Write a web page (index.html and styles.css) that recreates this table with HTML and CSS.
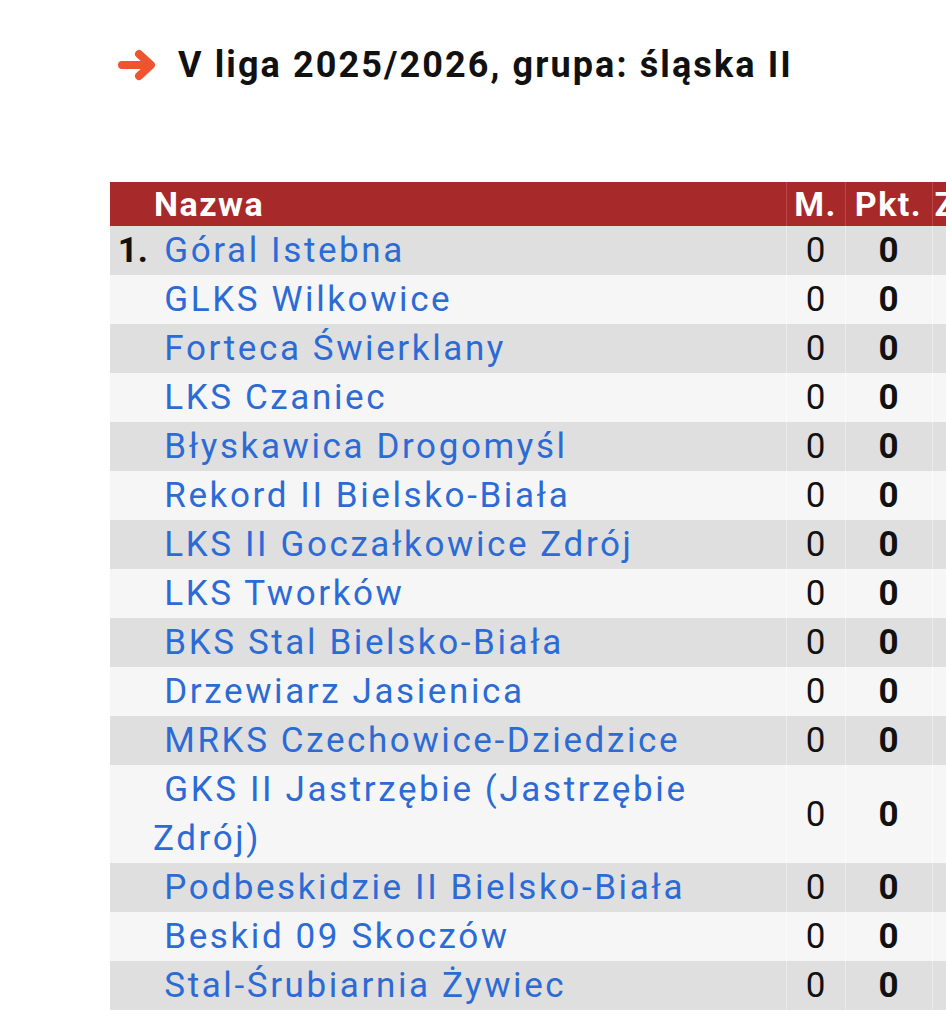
FILE: index.html
```html
<!DOCTYPE html>
<html lang="pl">
<head>
<meta charset="utf-8">
<title>V liga 2025/2026</title>
<link rel="stylesheet" href="styles.css">
</head>
<body>
<div class="page">
  <h2 class="title">
    <svg class="arrow" viewBox="0 0 40 32" width="40" height="32" aria-hidden="true">
      <path d="M5 16 H33" stroke="#ef5430" stroke-width="8" stroke-linecap="round" fill="none"/>
      <path d="M22 5 L34 16 L22 27" stroke="#ef5430" stroke-width="8" stroke-linecap="round" stroke-linejoin="round" fill="none"/>
    </svg>
    <span>V liga 2025/2026, grupa: śląska II</span>
  </h2>
  <table class="standings">
    <colgroup>
      <col class="c-pos"><col class="c-name"><col class="c-m"><col class="c-pkt"><col class="c-z">
    </colgroup>
    <thead>
      <tr><th></th><th class="name">Nazwa</th><th>M.</th><th>Pkt.</th><th>Zw.</th></tr>
    </thead>
    <tbody>
      <tr><td class="pos">1.</td><td class="name"> <a href="#">Góral Istebna</a></td><td>0</td><td class="pkt">0</td><td>0</td></tr>
      <tr><td class="pos"></td><td class="name"> <a href="#">GLKS Wilkowice</a></td><td>0</td><td class="pkt">0</td><td>0</td></tr>
      <tr><td class="pos"></td><td class="name"> <a href="#">Forteca Świerklany</a></td><td>0</td><td class="pkt">0</td><td>0</td></tr>
      <tr><td class="pos"></td><td class="name"> <a href="#">LKS Czaniec</a></td><td>0</td><td class="pkt">0</td><td>0</td></tr>
      <tr><td class="pos"></td><td class="name"> <a href="#">Błyskawica Drogomyśl</a></td><td>0</td><td class="pkt">0</td><td>0</td></tr>
      <tr><td class="pos"></td><td class="name"> <a href="#">Rekord II Bielsko-Biała</a></td><td>0</td><td class="pkt">0</td><td>0</td></tr>
      <tr><td class="pos"></td><td class="name"> <a href="#">LKS II Goczałkowice Zdrój</a></td><td>0</td><td class="pkt">0</td><td>0</td></tr>
      <tr><td class="pos"></td><td class="name"> <a href="#">LKS Tworków</a></td><td>0</td><td class="pkt">0</td><td>0</td></tr>
      <tr><td class="pos"></td><td class="name"> <a href="#">BKS Stal Bielsko-Biała</a></td><td>0</td><td class="pkt">0</td><td>0</td></tr>
      <tr><td class="pos"></td><td class="name"> <a href="#">Drzewiarz Jasienica</a></td><td>0</td><td class="pkt">0</td><td>0</td></tr>
      <tr><td class="pos"></td><td class="name"> <a href="#">MRKS Czechowice-Dziedzice</a></td><td>0</td><td class="pkt">0</td><td>0</td></tr>
      <tr><td class="pos"></td><td class="name"> <a href="#">GKS II Jastrzębie (Jastrzębie Zdrój)</a></td><td>0</td><td class="pkt">0</td><td>0</td></tr>
      <tr><td class="pos"></td><td class="name"> <a href="#">Podbeskidzie II Bielsko-Biała</a></td><td>0</td><td class="pkt">0</td><td>0</td></tr>
      <tr><td class="pos"></td><td class="name"> <a href="#">Beskid 09 Skoczów</a></td><td>0</td><td class="pkt">0</td><td>0</td></tr>
      <tr><td class="pos"></td><td class="name"> <a href="#">Stal-Śrubiarnia Żywiec</a></td><td>0</td><td class="pkt">0</td><td>0</td></tr>
    </tbody>
  </table>
</div>
</body>
</html>
```
FILE: styles.css
```css
html, body {
  margin: 0;
  padding: 0;
  background: #ffffff;
  overflow: hidden;
}
body {
  font-family: Roboto, "Liberation Sans", sans-serif;
  color: #111;
}
.page {
  padding: 40px 0 0 110px;
}
.title {
  display: flex;
  align-items: center;
  gap: 21px;
  margin: 0 0 0 7px;
  font-size: 36px;
  font-weight: 700;
  letter-spacing: 2.1px;
  line-height: 50px;
  color: #111;
}
.arrow {
  flex: none;
}
.standings {
  margin-top: 92px;
  border-collapse: collapse;
  table-layout: fixed;
  width: 884px;
  font-size: 35px;
}
.c-pos { width: 40px; }
.c-name { width: 636px; }
.c-m { width: 59px; }
.c-pkt { width: 87px; }
.c-z { width: 62px; }
.standings th {
  background: #a7292a;
  color: #fff;
  font-size: 34px;
  font-weight: 700;
  letter-spacing: 1.5px;
  height: 44px;
  line-height: 44px;
  padding: 0;
  text-align: center;
  border-left: 1px solid #b8484a;
}
.standings th:first-child,
.standings th.name {
  border-left: none;
}
.standings th.name {
  text-align: left;
  padding-left: 4px;
}
.standings td {
  padding: 0;
  line-height: 49px;
  text-align: center;
  border-left: 1px solid #ebebeb;
  color: #111;
}
.standings td.pos,
.standings td.name {
  border-left: none;
}
.standings tbody tr:nth-child(odd) td { background: #dfdfdf; }
.standings tbody tr:nth-child(even) td { background: #f6f6f6; }
.standings tbody tr:nth-child(even) td { border-left-color: #fbfbfb; }
.standings td.pos {
  font-weight: 700;
  text-align: right;
  padding-right: 2px;
}
.standings td.name {
  text-align: left;
  padding-left: 3px;
  padding-right: 5px;
  white-space: pre-wrap;
  letter-spacing: 2.6px;
}
.standings td.name a {
  color: #2c6bd6;
  text-decoration: none;
}
.standings td.pkt {
  font-weight: 700;
}
```
